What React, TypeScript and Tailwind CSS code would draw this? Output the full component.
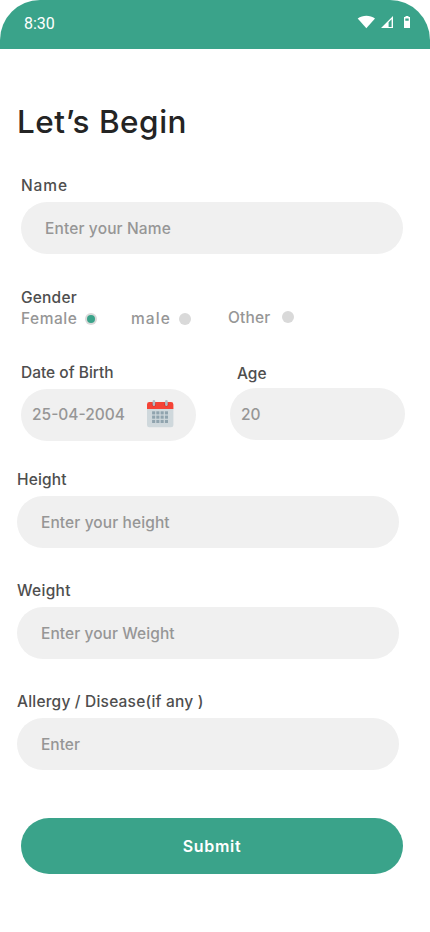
import React from "react";

type FieldProps = {
  label: string;
  placeholder: string;
  className: string;
  labelTracking?: string;
  textTracking?: string;
};

function Field({ label, placeholder, className, labelTracking = "", textTracking = "" }: FieldProps) {
  return (
    <div className={`w-[382px] ${className}`}>
      <div className={`h-[27px] whitespace-nowrap text-[15.5px] leading-[21px] font-medium text-[#4e4e4e] ${labelTracking}`}>
        {label}
      </div>
      <div className="flex h-[52px] items-center rounded-full bg-[#f0f0f0] pl-6">
        <span className={`pt-px whitespace-nowrap text-[15.5px] leading-[21px] font-medium text-[#969696] ${textTracking}`}>
          {placeholder}
        </span>
      </div>
    </div>
  );
}

function StatusIcons() {
  return (
    <svg className="h-[14px] w-[54px]" viewBox="357 15 54 14" fill="#fff">
      <path d="M357.7 18.6C362.8 14.9 369.9 14.9 375 18.6L366.35 28.2Z" />
      <path fillRule="evenodd" d="M381 28L393 16V28ZM388.6 27H391.6V19.2L388.6 22.2Z" />
      <path fillRule="evenodd" d="M405.5 16H408.5V17H410V28H404V17H405.5ZM405.3 18.6V20.8H408.7V18.6Z" />
    </svg>
  );
}

function Calendar() {
  return (
    <svg className="mb-[2px] h-[28px] w-[28px]" viewBox="0 0 28 28">
      <path d="M1 8.5H27.4V25A2.3 2.3 0 0 1 25.1 27.3H3.3A2.3 2.3 0 0 1 1 25Z" fill="#cfd8dc" />
      <path d="M1 9V4.4A2.4 2.4 0 0 1 3.4 2H25A2.4 2.4 0 0 1 27.4 4.4V9Z" fill="#f44336" />
      <circle cx="7.9" cy="4.4" r="2.1" fill="#c9302c" />
      <circle cx="20.4" cy="4.4" r="2.1" fill="#c9302c" />
      <path d="M7.9 1.3V4.8M20.4 1.3V4.8" stroke="#b0bec5" strokeWidth="2.6" strokeLinecap="round" />
      <g fill="#90a4ae">
        {[11.3, 15.6, 19.9].map((y) =>
          [6.1, 10.3, 14.6, 18.9].map((x) => <rect key={`${x}-${y}`} x={x} y={y} width="3.1" height="3.1" />)
        )}
      </g>
    </svg>
  );
}

export default function App() {
  return (
    <main className="h-[932px] w-[430px] overflow-hidden bg-white font-['Inter',sans-serif]">
      <header className="flex h-[49px] items-start justify-between rounded-t-[40px] bg-[#3aa38a] pt-[15px] pr-[19px] pl-6 text-white">
        <span className="font-['Roboto',sans-serif] text-base leading-[18px]">8:30</span>
        <StatusIcons />
      </header>

      <h1 className="mt-[49px] ml-[17px] h-12 whitespace-nowrap text-[31.5px] leading-[48px] font-medium tracking-[0.5px] text-[#242424]">
        Let’s Begin
      </h1>

      <Field
        label="Name"
        placeholder="Enter your Name"
        className="mt-[29px] ml-[21px]"
        labelTracking="tracking-[0.9px]"
        textTracking="tracking-[0.14px]"
      />

      <section className="mt-[33px] ml-[21px] h-[43px] text-[15.5px] font-medium">
        <div className="h-[21px] leading-[21px] tracking-[0.2px] text-[#4e4e4e]">Gender</div>
        <div className="flex h-[22px] items-center leading-[21px] text-[#969696]">
          <span className="mb-px w-16 tracking-[0.5px]">Female</span>
          <span className="flex h-3 w-3 items-center justify-center rounded-full bg-[#d9d9d9]">
            <span className="h-2 w-2 rounded-full bg-[#3aa38a]" />
          </span>
          <span className="mb-px ml-[34px] w-12 tracking-[1.1px]">male</span>
          <span className="h-3 w-3 rounded-full bg-[#d9d9d9]" />
          <span className="mb-[3px] ml-[37px] w-[54px] tracking-[0.15px]">Other</span>
          <span className="mb-[4px] h-3 w-3 rounded-full bg-[#d9d9d9]" />
        </div>
      </section>

      <div className="mt-[32px] ml-[21px] flex h-[79px] gap-[34px] text-[15.5px] font-medium">
        <div className="w-[175px]">
          <div className="h-[27px] leading-[21px] text-[#4e4e4e]">Date of Birth</div>
          <div className="flex h-[52px] items-center rounded-full bg-[#f0f0f0] pl-[11px] text-[#969696]">
            <span className="w-[114px]">25-04-2004</span>
            <Calendar />
          </div>
        </div>
        <div className="w-[175px]">
          <div className="h-[26px] pt-px pl-[7px] leading-[21px] text-[#4e4e4e]">Age</div>
          <div className="flex h-[52px] items-center rounded-full bg-[#f0f0f0] pt-px pl-[11px] text-[#969696]">20</div>
        </div>
      </div>

      <Field
        label="Height"
        placeholder="Enter your height"
        className="mt-[28px] ml-[17px]"
        labelTracking="tracking-[0.15px]"
        textTracking="tracking-[0.1px]"
      />
      <Field
        label="Weight"
        placeholder="Enter your Weight"
        className="mt-[32px] ml-[17px]"
        labelTracking="tracking-[0.3px]"
        textTracking="tracking-[0.07px]"
      />
      <Field
        label="Allergy / Disease(if any )"
        placeholder="Enter"
        className="mt-[32px] ml-[17px]"
        labelTracking="tracking-[0.2px]"
      />

      <button className="mt-12 ml-[21px] flex h-14 w-[382px] items-center justify-center rounded-full bg-[#3aa38a] text-base font-semibold tracking-[0.7px] text-white">
        Submit
      </button>
    </main>
  );
}
